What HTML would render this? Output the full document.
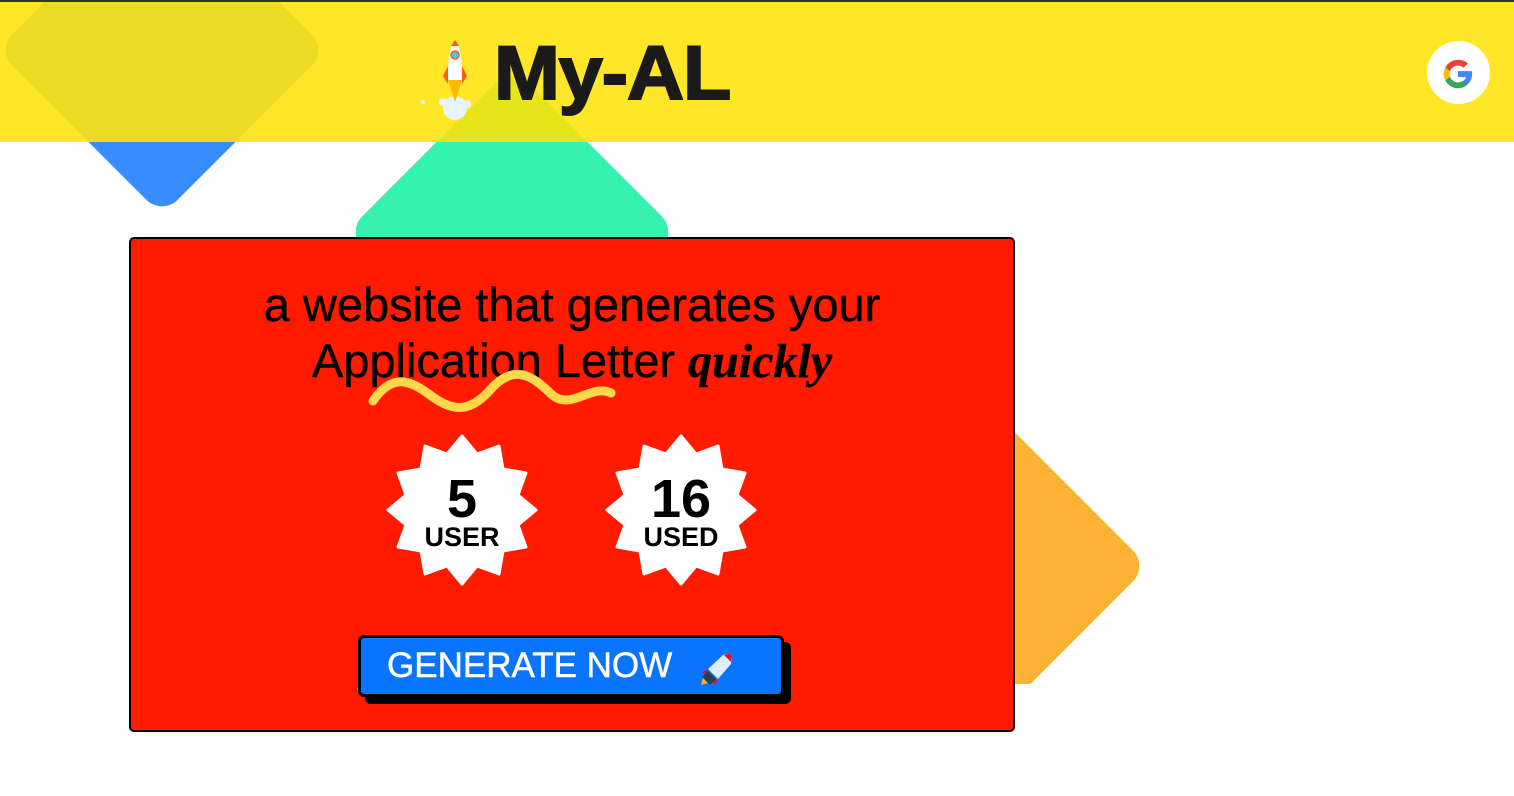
<!DOCTYPE html>
<html><head><meta charset="utf-8"><style>
*{margin:0;padding:0;box-sizing:border-box}
html,body{width:1514px;height:796px;overflow:hidden;background:#fff;font-family:"Liberation Sans",sans-serif}
.d{position:absolute;border-radius:22px;transform:rotate(45deg)}
#hdr{position:absolute;left:0;top:0;width:1514px;height:142px;background:#ffe629;border-top:2px solid #333;overflow:hidden}
#clip{position:absolute;left:0;top:0;width:1514px;height:684px;overflow:hidden}
.card{position:absolute;left:129px;top:237px;width:886px;height:495px;background:#ff1a00;border:2px solid #000;border-radius:5px}
.t{position:absolute;left:0;width:882px;text-align:center;font-size:47px;color:#000;line-height:1;-webkit-text-stroke:0.4px #000}
.btn{position:absolute;left:358px;top:635px;width:426px;height:62px;background:#0a74ff;border:3px solid #000;border-radius:6px;box-shadow:7px 7px 0 #000;color:#fff;font-size:35px;line-height:56px;padding-left:26px;-webkit-text-stroke:0.5px #fff}
</style></head><body>
<div id="clip">
<div class="d" style="left:45px;top:-67px;width:234px;height:234px;background:#388cff"></div>
<div class="d" style="left:395px;top:115px;width:234px;height:234px;background:#36f2b0"></div>
<div class="d" style="left:866px;top:449px;width:234px;height:234px;background:#ffb233"></div>
</div>
<div id="hdr">
<div class="d" style="left:45px;top:-69px;width:234px;height:234px;background:#ebda26"></div>
<div class="d" style="left:395px;top:113px;width:234px;height:234px;background:#e8e41c"></div>
<svg style="position:absolute;left:415px;top:34px" width="70" height="88" viewBox="0 0 70 88">
<ellipse cx="40" cy="72" rx="12" ry="12" fill="#e6f4fb"/><circle cx="28" cy="66" r="4" fill="#e6f4fb"/><circle cx="52" cy="68" r="4" fill="#e6f4fb"/><circle cx="8" cy="66" r="2" fill="#e6f4fb"/>
<path d="M33 44 L47 44 L40 66 Z" fill="#ffb800"/>
<path d="M33 30 L28 40 L33 48 Z M47 30 L52 40 L47 48 Z" fill="#ff5a1f"/>
<path d="M40 4 C46 12 47 22 47 44 L33 44 C33 22 34 12 40 4 Z" fill="#fff"/>
<path d="M40 4 L44 10 L36 10 Z" fill="#ff5a1f"/>
<circle cx="40" cy="19" r="4" fill="#3ad0e8" stroke="#ff5a1f" stroke-width="1.5"/>
</svg>
<div style="position:absolute;left:494px;top:28px;font-size:76px;font-weight:bold;color:#1a1a1a;letter-spacing:-1px;transform:scaleX(1.04);transform-origin:left;-webkit-text-stroke:2px #1a1a1a">My-AL</div>
<div style="position:absolute;left:1427px;top:39px;width:63px;height:63px;border-radius:50%;background:#fff"></div>
<svg style="position:absolute;left:1441px;top:55px" width="34" height="34" viewBox="0 0 48 48">
<path d="M43.6 20H24v8.4h11.3C33.7 33.1 29.3 36 24 36c-6.6 0-12-5.4-12-12s5.4-12 12-12c3 0 5.8 1.1 7.9 3l5.9-5.9C34.1 5.7 29.3 4 24 4 13 4 4 13 4 24s9 20 20 20 20-9 20-20c0-1.3-.1-2.7-.4-4z" fill="#4285f4"/>
<path d="M6.3 14.7l6.6 4.8C14.7 15.1 19 12 24 12c3 0 5.8 1.1 7.9 3l5.9-5.9C34.1 5.7 29.3 4 24 4 16.3 4 9.7 8.3 6.3 14.7z" fill="#ea4335"/>
<path d="M24 44c5.2 0 9.9-2 13.4-5.2l-6.2-5.2C29.2 35.1 26.7 36 24 36c-5.2 0-9.6-3.3-11.3-8l-6.5 5C9.5 39.6 16.2 44 24 44z" fill="#34a853"/>
<path d="M6.3 14.7C4.8 17.4 4 20.6 4 24s.8 6.6 2.2 9l6.5-5c-.4-1.3-.7-2.6-.7-4s.3-2.7.7-4z" fill="#fbbc05"/>
</svg>
</div>
<div class="card">
<div class="t" style="top:42px">a website that generates your</div>
<div class="t" style="top:98px">Application Letter <i style="font-family:'Liberation Serif',serif;font-weight:bold;font-size:48px">quickly</i></div>
</div>
<svg style="position:absolute;left:0;top:0" width="1514" height="796">
<path d="M373 401 C392 373 410 380 430 395 S468 415 490 390 S530 373 550 393 S590 383 611 393" fill="none" stroke="#ffd84a" stroke-width="9" stroke-linecap="round"/>
<g fill="#fff" stroke="#fff" stroke-width="3" stroke-linejoin="round">
<polygon transform="translate(462,510)" points="0,-74 15,-56 37,-64 41,-41 64,-37 56,-15 74,0 56,15 64,37 41,41 37,64 15,56 0,74 -15,56 -37,64 -41,41 -64,37 -56,15 -74,0 -56,-15 -64,-37 -41,-41 -37,-64 -15,-56"/>
<polygon transform="translate(681,510)" points="0,-74 15,-56 37,-64 41,-41 64,-37 56,-15 74,0 56,15 64,37 41,41 37,64 15,56 0,74 -15,56 -37,64 -41,41 -64,37 -56,15 -74,0 -56,-15 -64,-37 -41,-41 -37,-64 -15,-56"/>
</g>
<g font-family="Liberation Sans,sans-serif" font-weight="bold" text-anchor="middle" fill="#000">
<text x="462" y="517" font-size="54">5</text><text x="462" y="546" font-size="27">USER</text>
<text x="681" y="517" font-size="54">16</text><text x="681" y="546" font-size="27">USED</text>
</g>
</svg>
<div class="btn">GENERATE NOW</div>
<svg style="position:absolute;left:698px;top:650px" width="38" height="38" viewBox="0 0 38 38">
<path d="M34 3 L33 14 L20 29 L10 19 L25 5 Z" fill="#dbeefa"/>
<path d="M34 3 L26 5 L33 12 Z" fill="#e8101c"/>
<path d="M10 19 L4 22 L8 25 Z M20 29 L17 35 L14 31 Z" fill="#e8101c"/>
<path d="M10 21 L18 29 L12 35 L4 27 Z" fill="#2a3c5a"/>
<path d="M5 28 L3 35 L10 33 Z" fill="#ffb800"/>
</svg>
</body></html>
